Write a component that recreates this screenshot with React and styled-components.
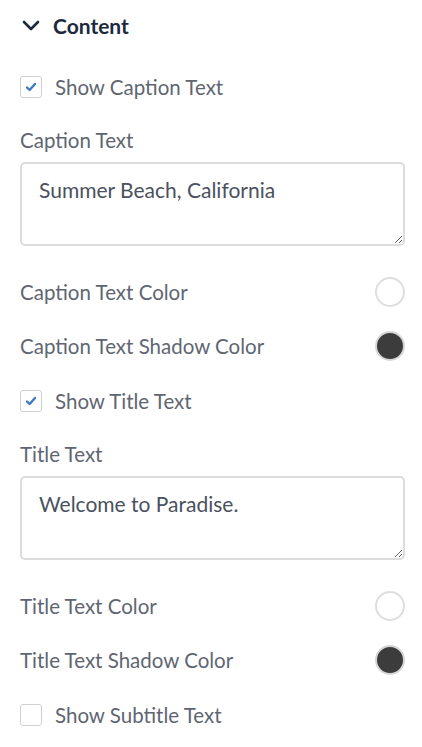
import React from "react";
import styled, { createGlobalStyle } from "styled-components";

const GlobalStyle = createGlobalStyle`
  body {
    margin: 0;
    background: #fff;
    font-family: Lato, "Open Sans", sans-serif;
  }
`;

const Panel = styled.div`
  width: 422px;
  padding: 0 17px 0 20px;
  box-sizing: border-box;
`;

const SectionHeader = styled.div`
  display: flex;
  align-items: center;
  gap: 13px;
  height: 50px;
  margin-bottom: 9px;
  padding-left: 2px;
  color: #1c2940;
  font-size: 21px;
  font-weight: 700;
`;

const Row = styled.div`
  display: flex;
  align-items: center;
  justify-content: space-between;
  height: 54px;
  color: #5f6672;
  font-size: 20.5px;
`;

const CheckRow = styled.label`
  display: flex;
  align-items: center;
  gap: 13px;
  height: 56px;
  color: #5f6672;
  font-size: 20.5px;
`;

const Box = styled.span`
  width: 22px;
  height: 22px;
  box-sizing: border-box;
  border: 1px solid #cfd1d4;
  border-radius: 3px;
  display: flex;
  align-items: center;
  justify-content: center;
  background: #fff;
`;

const Field = styled.div`
  display: flex;
  flex-direction: column;
  gap: 10px;
  padding-top: 13px;
  padding-bottom: 19px;
`;

const FieldLabel = styled.div`
  color: #5f6672;
  font-size: 20.5px;
  line-height: 24px;
`;

const TextArea = styled.textarea`
  box-sizing: border-box;
  width: 100%;
  height: 84px;
  border: 2px solid #dcdcdc;
  border-radius: 5px;
  padding: 13px 17px;
  font-family: Lato, "Open Sans", sans-serif;
  font-size: 21px;
  color: #4a5160;
  outline: none;
  resize: vertical;
`;

const Swatch = styled.span`
  width: 30px;
  height: 30px;
  box-sizing: border-box;
  border-radius: 50%;
  border: 2px solid ${(p) => (p.dark ? "#d6d6d6" : "#dedede")};
  background: ${(p) => p.color};
`;

const Check = () => (
  <svg width="12" height="10" viewBox="0 0 12 10">
    <path d="M2 5.5 L4.6 8 L10 2" fill="none" stroke="#3d7bc9" strokeWidth="2.4" strokeLinecap="round" strokeLinejoin="round" />
  </svg>
);

const Checkbox = ({ checked, children }) => (
  <CheckRow>
    <Box>{checked && <Check />}</Box>
    {children}
  </CheckRow>
);

const ColorRow = ({ label, color, dark }) => (
  <Row>
    {label}
    <Swatch color={color} dark={dark} />
  </Row>
);

export default function App() {
  return (
    <>
      <GlobalStyle />
      <Panel>
        <SectionHeader>
          <svg width="18" height="11" viewBox="0 0 18 11">
            <path d="M2 2 L9 9 L16 2" fill="none" stroke="#1c2940" strokeWidth="2.6" strokeLinecap="round" strokeLinejoin="round" />
          </svg>
          Content
        </SectionHeader>
        <Checkbox checked>Show Caption Text</Checkbox>
        <Field>
          <FieldLabel>Caption Text</FieldLabel>
          <TextArea readOnly defaultValue="Summer Beach, California" />
        </Field>
        <ColorRow label="Caption Text Color" color="#fff" />
        <ColorRow label="Caption Text Shadow Color" color="#3c3c3c" dark />
        <Checkbox checked>Show Title Text</Checkbox>
        <Field>
          <FieldLabel>Title Text</FieldLabel>
          <TextArea readOnly defaultValue="Welcome to Paradise." />
        </Field>
        <ColorRow label="Title Text Color" color="#fff" />
        <ColorRow label="Title Text Shadow Color" color="#3c3c3c" dark />
        <Checkbox>Show Subtitle Text</Checkbox>
      </Panel>
    </>
  );
}
